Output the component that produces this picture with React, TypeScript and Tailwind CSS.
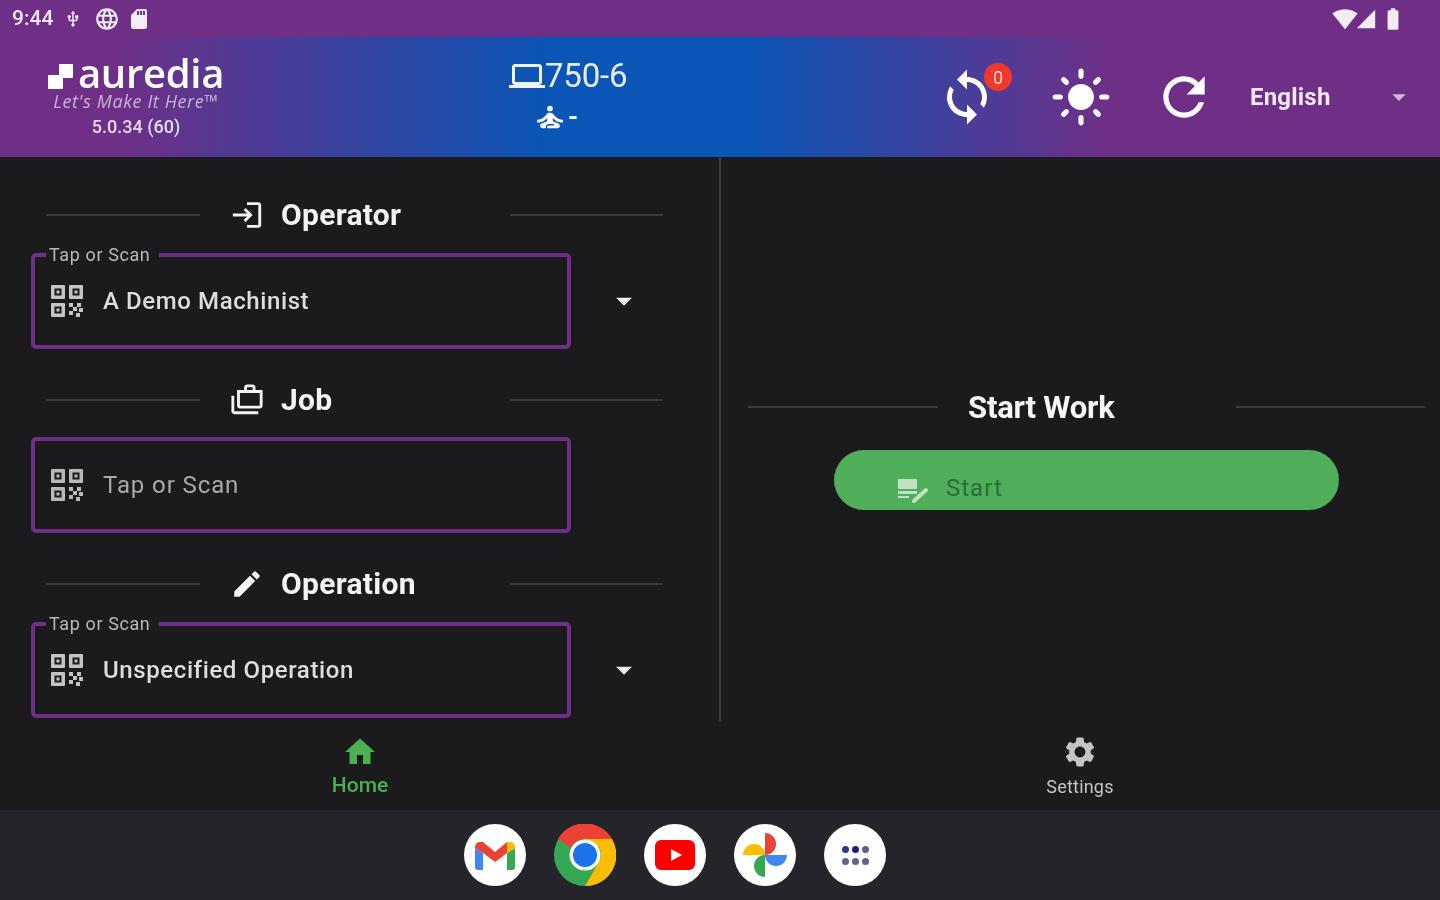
import type { ReactNode } from "react";
import {
  MdArrowDropDown,
  MdBatteryFull,
  MdEdit,
  MdHome,
  MdLanguage,
  MdLightMode,
  MdLogin,
  MdOutlineCases,
  MdOutlineLaptop,
  MdRefresh,
  MdSdCard,
  MdSelfImprovement,
  MdSettings,
  MdSignalCellular4Bar,
  MdSignalWifi4Bar,
  MdSync,
  MdUsb,
} from "react-icons/md";

function StatusBar() {
  return (
    <div className="flex h-[37px] items-center justify-between bg-[#6f2f87] pl-[12px] pr-[34px] text-[#f2ecf5]">
      <div className="flex items-center">
        <span className="text-[21px] font-medium leading-none">9:44</span>
        <MdUsb size={18} className="ml-[11px]" />
        <MdLanguage size={26} className="ml-[12px]" />
        <MdSdCard size={24} className="ml-[7px]" />
      </div>
      <div className="flex items-center">
        <MdSignalWifi4Bar size={26} />
        <MdSignalCellular4Bar size={22} className="-ml-[3px]" />
        <MdBatteryFull size={26} className="ml-[3px]" />
      </div>
    </div>
  );
}

function AurediaLogo() {
  return (
    <div className="-mt-[4px] flex w-[176px] flex-col items-center text-white">
      <div className="flex items-end">
        <svg width="25" height="25" viewBox="0 0 25 25" className="mb-[3px] mr-[5px] shrink-0">
          <path d="M11 1q0-1 1-1h12q1 0 1 1v12q0 1-1 1h-9v10q0 1-1 1H1q-1 0-1-1V12q0-1 1-1h10z" fill="#fff" />
        </svg>
        <span className="font-['Open_Sans'] text-[40px] font-semibold leading-[38px] tracking-[-0.3px]">
          auredia
        </span>
      </div>
      <span className="font-['Open_Sans'] text-[18px] italic leading-[18px] tracking-[0.6px] text-[#c5b4d6]">
        Let's Make It Here™
      </span>
      <span className="mt-[7px] text-[18px] font-medium leading-[20px] text-[#e4dcea]">5.0.34 (60)</span>
    </div>
  );
}

function Header() {
  return (
    <div className="flex h-[120px] items-center bg-[linear-gradient(to_right,#6f2f87_8%,#0a55b5_38%,#0a55b5_52%,#6f2f87_77%)] pl-[48px] text-white">
      <AurediaLogo />
      <div className="ml-[285px] flex w-[132px] flex-col pb-[4px]">
        <div className="flex items-center">
          <MdOutlineLaptop size={36} className="shrink-0 text-[#eef3fb]" />
          <span className="text-[33px] leading-[40px] tracking-[-0.2px] text-[#e6eefa]">750-6</span>
        </div>
        <div className="ml-[24px] mt-[4px] flex items-center">
          <MdSelfImprovement size={34} />
          <span className="ml-[1px] text-[26px] font-bold leading-none">-</span>
        </div>
      </div>
      <div className="relative ml-[296px]">
        <MdSync size={60} />
        <span className="absolute -right-[15px] -top-[4px] flex h-[28px] w-[28px] items-center justify-center rounded-full bg-[#f1392b] text-[18px] text-[#fbd9d4]">
          0
        </span>
      </div>
      <MdLightMode size={62} className="ml-[53px]" />
      <MdRefresh size={62} className="ml-[41px]" />
      <span className="ml-[35px] w-[133px] text-[24px] font-bold tracking-[0.2px] text-[#f0e8f3]">English</span>
      <MdArrowDropDown size={32} className="text-[#cdb9d6]" />
    </div>
  );
}

function SectionHeading({ icon, title }: { icon: ReactNode; title: string }) {
  return (
    <div className="flex h-[40px] items-center pl-[46px]">
      <div className="h-[2px] w-[154px] bg-[#3a3a3c]" />
      <div className="flex w-[310px] items-center pl-[30px]">
        <span className="flex w-[34px] justify-center text-[#f4f4f4]">{icon}</span>
        <span className="ml-[17px] text-[30px] font-bold leading-none tracking-[0.3px] text-[#f4f4f4]">{title}</span>
      </div>
      <div className="h-[2px] w-[153px] bg-[#3a3a3c]" />
    </div>
  );
}

function QrIcon({ className }: { className: string }) {
  return (
    <svg width="32" height="32" viewBox="0 0 32 32" fill="currentColor" className={`shrink-0 ${className}`}>
      <path
        fillRule="evenodd"
        d="M1 0h12a1 1 0 0 1 1 1v12a1 1 0 0 1-1 1H1a1 1 0 0 1-1-1V1a1 1 0 0 1 1-1zm2.500 3.500v7h7v-7zM19 0h12a1 1 0 0 1 1 1v12a1 1 0 0 1-1 1H19a1 1 0 0 1-1-1V1a1 1 0 0 1 1-1zm2.500 3.500v7h7v-7zM1 18h12a1 1 0 0 1 1 1v12a1 1 0 0 1-1 1H1a1 1 0 0 1-1-1V19a1 1 0 0 1 1-1zm2.500 3.500v7h7v-7z"
      />
      <rect x="5.500" y="5.500" width="3" height="3" />
      <rect x="23.500" y="5.500" width="3" height="3" />
      <rect x="5.500" y="23.500" width="3" height="3" />
      <rect x="18" y="18" width="4" height="4" />
      <rect x="26" y="18" width="4" height="4" />
      <rect x="22" y="22" width="4" height="4" />
      <rect x="28" y="23" width="4" height="4" />
      <rect x="18" y="26" width="4" height="4" />
      <rect x="25" y="28" width="4" height="4" />
    </svg>
  );
}

function ScanField({
  value,
  floating,
  hasMenu,
  top = "mt-[18px]",
}: {
  value: string;
  floating?: boolean;
  hasMenu?: boolean;
  top?: string;
}) {
  return (
    <div className={`${top} flex items-center pl-[31px]`}>
      <div className="relative flex h-[96px] w-[540px] items-center rounded-[5px] border-[4px] border-[#6f2f87] pl-[16px]">
        {floating && (
          <span className="absolute -top-[12px] left-[11px] bg-[#1b1b1d] pl-[3px] pr-[9px] text-[18px] leading-[20px] tracking-[0.6px] text-[#b9b9ba]">
            Tap or Scan
          </span>
        )}
        <QrIcon className={floating ? "text-[#c4c4c5]" : "text-[#b9b9ba]"} />
        <span
          className={
            floating
              ? "ml-[20px] text-[24px] font-medium tracking-[0.6px] text-[#dededf]"
              : "ml-[20px] text-[24px] tracking-[0.9px] text-[#a9a9aa]"
          }
        >
          {value}
        </span>
      </div>
      {hasMenu && <MdArrowDropDown size={38} className="ml-[34px] text-[#f0f0f0]" />}
    </div>
  );
}

function LeftColumn() {
  return (
    <div className="h-[565px] w-[721px] shrink-0 border-r-[2px] border-[#3a3a3c] pt-[38px]">
      <SectionHeading icon={<MdLogin size={38} />} title="Operator" />
      <ScanField value="A Demo Machinist" floating hasMenu />
      <div className="mt-[31px]">
        <SectionHeading icon={<MdOutlineCases size={40} />} title="Job" />
      </div>
      <ScanField value="Tap or Scan" top="mt-[17px]" />
      <div className="mt-[31px]">
        <SectionHeading icon={<MdEdit size={36} />} title="Operation" />
      </div>
      <ScanField value="Unspecified Operation" floating hasMenu />
    </div>
  );
}

function RightColumn() {
  return (
    <div className="flex-1 pl-[27px] pt-[230px]">
      <div className="flex h-[40px] items-center">
        <div className="h-[2px] w-[190px] bg-[#3a3a3c]" />
        <span className="ml-[30px] w-[268px] text-[31px] font-bold leading-none tracking-[-0.2px] text-[#f6f6f6]">Start Work</span>
        <div className="h-[2px] w-[189px] bg-[#3a3a3c]" />
      </div>
      <div className="ml-[86px] mt-[23px] flex h-[60px] w-[505px] items-end rounded-full bg-[#4fae5a] pb-[6px] pl-[64px]">
        <svg width="30" height="24" viewBox="0 0 30 24" className="mb-[1px] shrink-0 text-[#c3e0c6]">
          <rect x="0" y="0" width="19" height="10" rx="1" fill="currentColor" />
          <rect x="0" y="12" width="19" height="3" fill="currentColor" />
          <rect x="0" y="17" width="11" height="2" fill="currentColor" />
          <path d="M16 22L28 11" stroke="currentColor" strokeWidth="4" strokeLinecap="round" fill="none" />
        </svg>
        <span className="ml-[18px] text-[24px] leading-[32px] tracking-[1px] text-[#2d6b38]">Start</span>
      </div>
    </div>
  );
}

function BottomNav() {
  return (
    <div className="grid h-[88px] grid-cols-2">
      <div className="flex flex-col items-center pt-[12px] text-[#4caf50]">
        <MdHome size={36} />
        <span className="mt-[2px] text-[21px] font-medium leading-[26px]">Home</span>
      </div>
      <div className="flex flex-col items-center pt-[12px] text-[#c4c4c5]">
        <MdSettings size={36} />
        <span className="mt-[5px] text-[18px] leading-[24px] tracking-[0.2px]">Settings</span>
      </div>
    </div>
  );
}

function DockCircle({ children }: { children: ReactNode }) {
  return (
    <div className="flex h-[62px] w-[62px] items-center justify-center rounded-full bg-white">{children}</div>
  );
}

function Dock() {
  return (
    <div className="flex h-[90px] items-center justify-center gap-[28px] bg-[#24242a] pr-[90px]">
      <DockCircle>
        <svg width="42" height="32" viewBox="0 0 42 32">
          <path d="M1 9v19a3 3 0 0 0 3 3h5V14z" fill="#4285f4" />
          <path d="M41 9v19a3 3 0 0 1-3 3h-5V14z" fill="#34a853" />
          <path d="M1 9l8 5 12 9 12-9V3L21 13 9 3H6C3 3 1 5 1 9z" fill="#ea4335" />
          <path d="M33 3v11l8-5c0-4-2-6-5-6z" fill="#fbbc04" />
        </svg>
      </DockCircle>
      <svg width="62" height="62" viewBox="0 0 62 62" className="shrink-0">
        <circle cx="31" cy="31" r="31" fill="#34a853" />
        <path d="M4 15A31 31 0 0 1 58 15H31A16 16 0 0 0 17 24z" fill="#ea4335" />
        <path d="M58 15A31 31 0 0 1 31 62L45 38A16 16 0 0 0 45 23L31 15z" fill="#fbbc04" />
        <circle cx="31" cy="31" r="15.500" fill="#fff" />
        <circle cx="31" cy="31" r="12" fill="#1a73e8" />
      </svg>
      <DockCircle>
        <svg width="40" height="30" viewBox="0 0 40 30">
          <rect x="0" y="0" width="40" height="30" rx="6" fill="#f00" />
          <path d="M16 9l11 6-11 6z" fill="#fff" />
        </svg>
      </DockCircle>
      <DockCircle>
        <svg width="46" height="46" viewBox="0 0 46 46">
          <path d="M23 23A11 11 0 0 0 1 23z" fill="#fbbc04" />
          <path d="M23 23V1a11 11 0 0 1 0 22z" fill="#ea4335" />
          <path d="M23 23h22a11 11 0 0 1-22 0z" fill="#4285f4" />
          <path d="M23 23v22a11 11 0 0 1 0-22z" fill="#34a853" />
        </svg>
      </DockCircle>
      <DockCircle>
        <div className="grid grid-cols-3 gap-x-[3px] gap-y-[5px]">
          <div className="h-[7px] w-[7px] rounded-full bg-[#2a3a8c]" />
          <div className="h-[7px] w-[7px] rounded-full bg-[#16237e]" />
          <div className="h-[7px] w-[7px] rounded-full bg-[#6b5a86]" />
          <div className="h-[7px] w-[7px] rounded-full bg-[#5f6390]" />
          <div className="h-[7px] w-[7px] rounded-full bg-[#5f6390]" />
          <div className="h-[7px] w-[7px] rounded-full bg-[#5f6390]" />
        </div>
      </DockCircle>
    </div>
  );
}

export default function App() {
  return (
    <div className="h-[900px] w-[1440px] overflow-hidden bg-[#1b1b1d] font-['Roboto',sans-serif] blur-[0.5px]">
      <StatusBar />
      <Header />
      <div className="flex h-[565px]">
        <LeftColumn />
        <RightColumn />
      </div>
      <BottomNav />
      <Dock />
    </div>
  );
}
